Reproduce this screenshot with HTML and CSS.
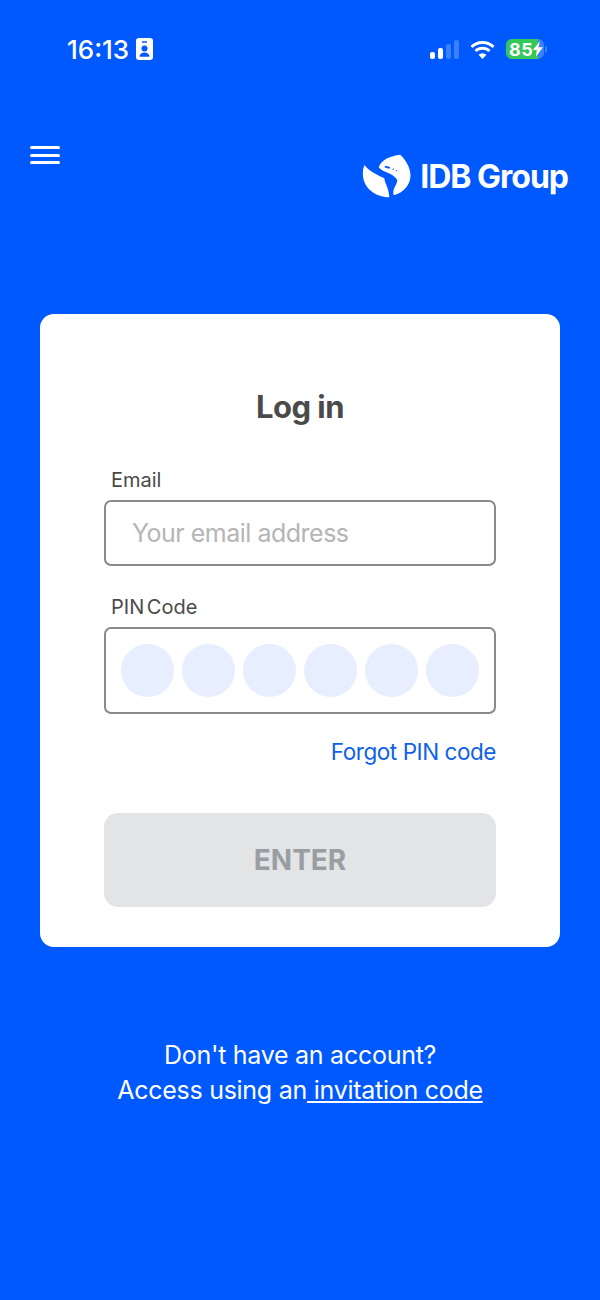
FILE: index.html
```html
<!DOCTYPE html>
<html lang="en">
<head>
    <meta charset="UTF-8">
    <meta name="viewport" content="width=device-width, initial-scale=1.0">
    <title>Log in</title>
    <link rel="stylesheet" href="styles.css">
</head>
<body>
    <div class="status-bar">
        <div class="status-left">
            <span class="time">16:13</span>
            <svg class="badge-icon" width="17" height="22" viewBox="0 0 17 22">
                <path fill="#fff" fill-rule="evenodd" d="M3 0h11a3 3 0 0 1 3 3v16a3 3 0 0 1-3 3H3a3 3 0 0 1-3-3V3a3 3 0 0 1 3-3zM6 3.200v1.600h5V3.200zM8.500 7.500a3 3 0 1 0 0 6 3 3 0 0 0 0-6zM3.500 18.800h10c0-2.600-2-4.300-5-4.300s-5 1.700-5 4.300z"/>
            </svg>
        </div>
        <div class="status-right">
            <div class="signal">
                <span class="bar bar-1"></span>
                <span class="bar bar-2"></span>
                <span class="bar bar-3"></span>
                <span class="bar bar-4"></span>
            </div>
            <svg class="wifi" width="25" height="19" viewBox="0 0 25 19">
                <path fill="none" stroke="#fff" stroke-width="3" d="M1.500 7a16 16 0 0 1 22 0M5.500 11a10.200 10.200 0 0 1 14 0"/>
                <path fill="#fff" d="M12.500 19l-4-4.300a6 6 0 0 1 8 0z"/>
            </svg>
            <div class="battery">
                <div class="battery-body">
                    <span class="battery-fill"></span>
                    <span class="battery-text">85</span>
                    <svg class="bolt" width="10" height="16" viewBox="0 0 9 14">
                        <path fill="#fff" d="M6 0L0 8h3.500L2.500 14 9 5.500H5z"/>
                    </svg>
                </div>
                <span class="battery-cap"></span>
            </div>
        </div>
    </div>

    <header class="top-bar">
        <button class="menu-btn" type="button" aria-label="Menu">
            <span></span>
            <span></span>
            <span></span>
        </button>
        <div class="logo">
            <svg width="49" height="44" viewBox="10 12 147 133">
                <path fill="#fff" d="M17 45C28 62 55 75 77 85C78 100 92 118 92 143C50 143 12 115 12 72C12 62 13 54 17 45Z"/>
                <path fill="#fff" d="M125 14C95 18 68 28 60 52C72 68 102 68 116 90C117 105 100 115 105 137C135 130 157 105 156 75C155 52 142 30 125 14Z"/>
                <ellipse fill="#0059ff" cx="86" cy="52" rx="9" ry="3" transform="rotate(15 86 52)"/>
                <circle fill="#0059ff" cx="104" cy="58" r="2"/>
                <circle fill="#0059ff" cx="114" cy="62" r="2"/>
            </svg>
            <span class="logo-text">IDB Group</span>
        </div>
    </header>

    <main class="card">
        <h1>Log in</h1>
        <form class="login-form">
            <label class="field-label" for="email">Email</label>
            <input class="text-input" type="text" id="email" placeholder="Your email address">

            <label class="field-label pin-label">PIN Code</label>
            <div class="pin-box">
                <span class="pin-dot"></span>
                <span class="pin-dot"></span>
                <span class="pin-dot"></span>
                <span class="pin-dot"></span>
                <span class="pin-dot"></span>
                <span class="pin-dot"></span>
            </div>

            <a class="forgot" href="#">Forgot PIN code</a>
            <button class="enter-btn" type="button">ENTER</button>
        </form>
    </main>

    <p class="invite">Don't have an account?<br>Access using an<a href="#"> invitation code</a></p>
</body>
</html>
```

FILE: styles.css
```css
* {
    box-sizing: border-box;
}
body {
    margin: 0;
    height: 1300px;
    background-color: #0059ff;
    font-family: Inter, "Liberation Sans", sans-serif;
    color: #4a4a4a;
    overflow: hidden;
}
.status-bar {
    display: flex;
    justify-content: space-between;
    align-items: center;
    height: 98px;
    padding: 0 53px 0 67px;
    color: #fff;
}
.status-left {
    display: flex;
    align-items: center;
    gap: 7px;
}
.time {
    font-size: 26px;
    font-weight: 500;
}
.status-right {
    display: flex;
    align-items: center;
    gap: 11px;
}
.signal {
    display: flex;
    align-items: flex-end;
    gap: 3px;
    height: 20px;
}
.bar {
    width: 5px;
    border-radius: 2px;
    background-color: #fff;
}
.bar-1 { height: 7px; }
.bar-2 { height: 11px; }
.bar-3 { height: 15px; background-color: #3d80ff; }
.bar-4 { height: 19px; background-color: #3d80ff; }
.battery {
    display: flex;
    align-items: center;
    gap: 1px;
}
.battery-body {
    position: relative;
    display: flex;
    align-items: center;
    gap: 0;
    width: 38px;
    height: 20px;
    padding-left: 3px;
    border-radius: 6px;
    background-color: #3d80ff;
    overflow: hidden;
}
.battery-fill {
    position: absolute;
    left: 0;
    top: 0;
    width: 32px;
    height: 20px;
    background-color: #34c759;
}
.battery-text {
    position: relative;
    font-size: 18px;
    font-weight: 700;
    letter-spacing: 0.5px;
}
.bolt {
    position: relative;
}
.battery-cap {
    width: 2px;
    height: 7px;
    border-radius: 0 2px 2px 0;
    background-color: #3d80ff;
}
.top-bar {
    display: flex;
    justify-content: space-between;
    align-items: flex-start;
    height: 216px;
    padding: 48px 32px 0 30px;
}
.menu-btn {
    display: flex;
    flex-direction: column;
    gap: 4.5px;
    width: 30px;
    padding: 0;
    border: none;
    background: none;
}
.menu-btn span {
    height: 3px;
    border-radius: 2px;
    background-color: #fff;
}
.logo {
    display: flex;
    align-items: center;
    gap: 9px;
    margin-top: 8px;
}
.logo-text {
    color: #fff;
    font-size: 32px;
    font-weight: 700;
    letter-spacing: -1px;
}
.card {
    width: 520px;
    height: 633px;
    margin: 0 auto;
    padding: 70px 64px 0;
    border-radius: 14px;
    background-color: #fff;
}
h1 {
    margin: 0 0 37px;
    font-size: 31px;
    line-height: 46px;
    font-weight: 700;
    letter-spacing: -0.5px;
    text-align: center;
}
.login-form {
    display: flex;
    flex-direction: column;
}
.field-label {
    margin: 0 0 7px 7px;
    font-size: 20px;
    line-height: 26px;
    word-spacing: -3px;
}
.pin-label {
    margin-top: 28px;
}
.text-input {
    width: 100%;
    height: 66px;
    padding: 0 26px;
    border: 2px solid #8a8a8a;
    border-radius: 7px;
    font-family: inherit;
    font-size: 25px;
    letter-spacing: -0.5px;
}
.text-input::placeholder {
    color: #b5b5b5;
    opacity: 1;
}
.pin-box {
    display: flex;
    justify-content: space-between;
    height: 87px;
    padding: 15px;
    border: 2px solid #8a8a8a;
    border-radius: 7px;
}
.pin-dot {
    width: 53px;
    height: 53px;
    border-radius: 50%;
    background-color: #e6eeff;
}
.forgot {
    align-self: flex-end;
    margin-top: 23px;
    color: #0f62e8;
    font-size: 22.5px;
    line-height: 30px;
    letter-spacing: -0.45px;
    text-decoration: none;
}
.enter-btn {
    height: 94px;
    margin-top: 46px;
    border: none;
    border-radius: 14px;
    background-color: #e2e4e6;
    color: #9a9ea2;
    font-family: inherit;
    font-size: 28px;
    font-weight: 700;
}
.invite {
    margin: 91px 0 0;
    color: #fff;
    font-size: 25px;
    line-height: 35px;
    letter-spacing: -0.27px;
    text-align: center;
}
.invite a {
    color: #fff;
    text-decoration: underline;
}
```
